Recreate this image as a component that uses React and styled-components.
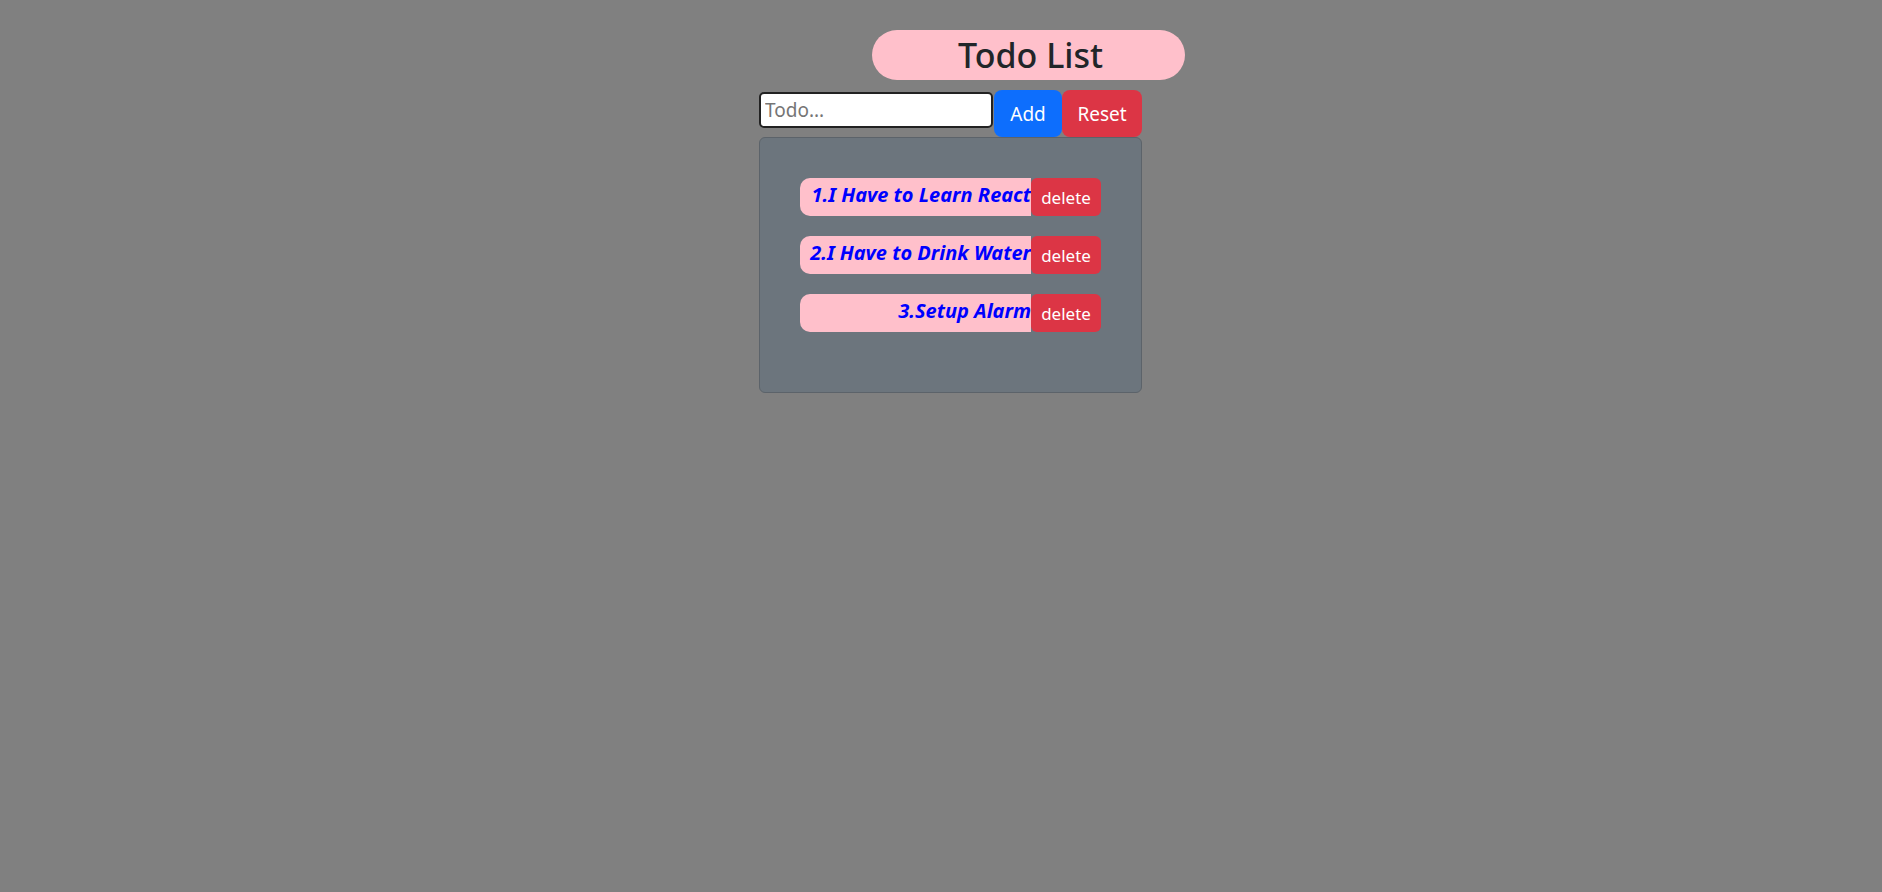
import styled, { createGlobalStyle } from "styled-components";

const GlobalStyle = createGlobalStyle`
  html, body {
    margin: 0;
    padding: 0;
    background-color: #808080;
    font-family: "Noto Sans", "Open Sans", sans-serif;
  }
  * {
    box-sizing: border-box;
  }
`;

const Page = styled.div`
  min-height: 892px;
  padding: 30px 0 0 759px;
  display: flex;
  flex-direction: column;
  align-items: flex-start;
`;

const Title = styled.h1`
  margin: 0 0 10px 113px;
  width: 313px;
  height: 50px;
  border-radius: 25px;
  background-color: pink;
  color: #212529;
  font-size: 34px;
  font-weight: 500;
  line-height: 50px;
  text-align: center;
  padding-left: 4px;
`;

const Form = styled.div`
  display: flex;
  align-items: flex-start;
`;

const Input = styled.input`
  width: 234px;
  height: 36px;
  margin: 2px 1px 0 0;
  border: 2px solid #222;
  border-radius: 5px;
  background: #fff;
  padding: 0 4px;
  font-family: inherit;
  font-size: 19px;
  color: #212529;

  &::placeholder {
    color: #757575;
  }
`;

const Button = styled.button`
  border: none;
  color: #fff;
  font-family: inherit;
  cursor: pointer;
  text-align: center;
  background-color: ${(p) => (p.$variant === "primary" ? "#0d6efd" : "#dc3545")};
  width: ${(p) => p.$width}px;
  height: ${(p) => (p.$large ? "47px" : "38px")};
  padding: 0;
  font-size: ${(p) => (p.$large ? "19px" : "17px")};
  border-radius: ${(p) => (p.$large ? "8px" : "6px")};
`;

const Board = styled.div`
  width: 383px;
  height: 256px;
  background-color: #6c757d;
  border: 1px solid #5c636a;
  border-radius: 6px;
  padding: 40px 40px 0 40px;
  display: flex;
  flex-direction: column;
  gap: 20px;
`;

const Item = styled.div`
  display: flex;
  align-items: stretch;
  height: 38px;
`;

const ItemText = styled.h5`
  flex: 1;
  margin: 0;
  background-color: pink;
  border-radius: 10px 0 0 10px;
  color: blue;
  font-size: 20px;
  font-weight: 700;
  font-style: italic;
  line-height: 34px;
  text-align: right;
  white-space: nowrap;
  overflow: hidden;
`;

const todos = [
  "1.I Have to Learn React",
  "2.I Have to Drink Water",
  "3.Setup Alarm",
];

const App = () => {
  return (
    <>
      <GlobalStyle />
      <Page>
        <Title>Todo List</Title>
        <Form>
          <Input placeholder="Todo..." />
          <Button $variant="primary" $large $width={68}>Add</Button>
          <Button $large $width={80}>Reset</Button>
        </Form>
        <Board>
          {todos.map((todo, index) => (
            <Item key={index}>
              <ItemText>{todo}</ItemText>
              <Button $width={70}>delete</Button>
            </Item>
          ))}
        </Board>
      </Page>
    </>
  );
};

export default App;
